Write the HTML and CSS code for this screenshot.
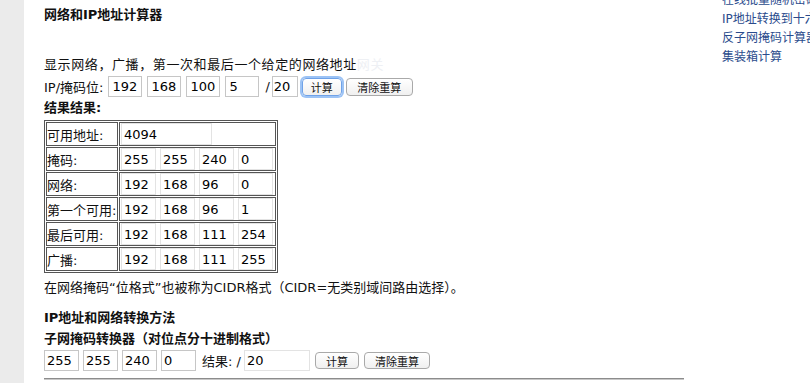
FILE: index.html
```html
<!DOCTYPE html>
<html lang="zh-CN">
<head>
<meta charset="utf-8">
<title>网络和IP地址计算器</title>
<link rel="stylesheet" href="styles.css">
</head>
<body>
<div class="page">
  <div class="gutter"></div>
  <main class="main">
    <h1 class="title">网络和IP地址计算器</h1>
    <p class="intro">显示网络，广播，第一次和最后一个给定的网络地址<span class="ghost">网关</span></p>
    <div class="iprow">
      <span class="lbl">IP/掩码位:</span>
      <input class="ip" value="192">
      <input class="ip" value="168">
      <input class="ip" value="100">
      <input class="ip" value="5">
      <span class="slash">/</span>
      <input class="ip mask" value="20">
      <button class="btn btn-calc btn-focus">计算</button>
      <button class="btn btn-clear">清除重算</button>
    </div>
    <div class="res-title">结果结果:</div>
    <table class="res">
      <tr><td class="k">可用地址:</td><td class="v"><div class="cells"><input class="cell wide" value="4094"></div></td></tr>
      <tr><td class="k">掩码:</td><td class="v"><div class="cells"><input class="cell" value="255"><input class="cell" value="255"><input class="cell" value="240"><input class="cell" value="0"></div></td></tr>
      <tr><td class="k">网络:</td><td class="v"><div class="cells"><input class="cell" value="192"><input class="cell" value="168"><input class="cell" value="96"><input class="cell" value="0"></div></td></tr>
      <tr><td class="k">第一个可用:</td><td class="v"><div class="cells"><input class="cell" value="192"><input class="cell" value="168"><input class="cell" value="96"><input class="cell" value="1"></div></td></tr>
      <tr><td class="k">最后可用:</td><td class="v"><div class="cells"><input class="cell" value="192"><input class="cell" value="168"><input class="cell" value="111"><input class="cell" value="254"></div></td></tr>
      <tr><td class="k">广播:</td><td class="v"><div class="cells"><input class="cell" value="192"><input class="cell" value="168"><input class="cell" value="111"><input class="cell" value="255"></div></td></tr>
    </table>
    <p class="note">在网络掩码“位格式”也被称为CIDR格式（CIDR=无类别域间路由选择）。</p>
    <h2 class="sub">IP地址和网络转换方法</h2>
    <h3 class="sub2">子网掩码转换器（对位点分十进制格式）</h3>
    <div class="maskrow">
      <input class="mi" value="255">
      <input class="mi" value="255">
      <input class="mi" value="240">
      <input class="mi" value="0">
      <span class="reslbl">结果: /</span>
      <input class="result" value="20">
      <button class="btn btn-calc2">计算</button>
      <button class="btn btn-clear2">清除重算</button>
    </div>
    <hr class="rule">
  </main>
  <nav class="side">
    <a href="#">在线批量随机密码生成</a>
    <a href="#">IP地址转换到十六进制</a>
    <a href="#">反子网掩码计算器</a>
    <a href="#">集装箱计算</a>
  </nav>
</div>
</body>
</html>
```

FILE: styles.css
```css
html, body {
  margin: 0;
  padding: 0;
  overflow: hidden;
  background: #fff;
}
body {
  font-family: "DejaVu Sans", "Noto Sans CJK SC", sans-serif;
  font-size: 13px;
  color: #111;
}
.page {
  display: flex;
  height: 383px;
}
.gutter {
  width: 24px;
  flex: none;
  background: #ebebeb;
}
.main {
  width: 640px;
  flex: none;
  padding: 6px 0 0 20px;
}
.title {
  margin: 0;
  font-size: 13px;
  font-weight: bold;
  line-height: 18px;
}
.intro {
  margin: 31px 0 0;
  line-height: 20px;
  font-size: 13px;
  letter-spacing: 0.6px;
}
.ghost {
  color: #eef0f4;
}
.iprow {
  display: flex;
  align-items: center;
  height: 23px;
}
.lbl {
  margin-right: 5px;
}
input {
  box-sizing: border-box;
  font: 13px "DejaVu Sans", sans-serif;
  color: #000;
  background: #fff;
  outline: none;
}
.ip {
  width: 34px;
  height: 21px;
  border: 1px solid #c6c6c6;
  padding: 0 0 0 3px;
  margin-right: 5px;
}
.ip.mask {
  width: 26px;
  padding-left: 1px;
  margin-right: 4px;
}
.slash {
  margin: 0 2px 0 1px;
}
.btn {
  box-sizing: border-box;
  height: 18px;
  border: 1px solid #a9a9a9;
  border-radius: 4px;
  background: linear-gradient(#ffffff, #f0f0f0);
  font: 11px "Noto Sans CJK SC", sans-serif;
  color: #111;
  padding: 0;
  line-height: 16px;
}
.btn-calc {
  width: 40px;
}
.btn-focus {
  border-color: #6fa2e8;
  box-shadow: 0 0 0 2px #9cc3f5;
}
.btn-clear {
  width: 67px;
  margin-left: 4px;
}
.res-title {
  font-weight: bold;
  line-height: 20px;
}
.res {
  margin-top: 2px;
  border: 1px solid #555;
  border-spacing: 1px;
}
.res td {
  border: 1px solid #555;
  padding: 0;
}
.res td.k {
  width: 70px;
  white-space: nowrap;
}
.res td.v {
  padding: 0 1px;
  width: 153px;
}
.cells {
  display: flex;
  gap: 4px;
}
.cell {
  width: 35px;
  height: 22px;
  border: 1px solid #e3e3e3;
  padding: 0 0 0 2px;
}
.cell.wide {
  width: 91px;
}
.note {
  margin: 5px 0 0;
  line-height: 20px;
}
.sub {
  margin: 10px 0 0;
  font-size: 13px;
  font-weight: bold;
  line-height: 20px;
}
.sub2 {
  margin: 2px 0 0;
  font-size: 13px;
  font-weight: bold;
  line-height: 18px;
}
.maskrow {
  display: flex;
  align-items: center;
  height: 22px;
  margin-top: 1px;
}
.mi {
  width: 35px;
  height: 21px;
  border: 1px solid #c6c6c6;
  padding: 0 0 0 2px;
  margin-right: 4px;
}
.reslbl {
  margin-left: 2px;
  margin-right: 3px;
}
.result {
  width: 66px;
  height: 21px;
  border: 1px solid #e3e3e3;
  padding: 0 0 0 2px;
}
.btn-calc2 {
  width: 44px;
  height: 17px;
  margin-left: 5px;
}
.btn-clear2 {
  width: 66px;
  height: 17px;
  margin-left: 5px;
}
.rule {
  margin: 7px 0 0;
  border: 0;
  border-top: 1px solid #8c8c8c;
  border-bottom: 1px solid #c8c8c8;
  height: 0;
}
.side {
  flex: 1;
  min-width: 0;
  margin-left: 38px;
  margin-top: -9px;
  white-space: nowrap;
  overflow: hidden;
  display: flex;
  flex-direction: column;
}
.side a {
  color: #2a4b8c;
  text-decoration: none;
  line-height: 19px;
  font-size: 12px;
}
```
